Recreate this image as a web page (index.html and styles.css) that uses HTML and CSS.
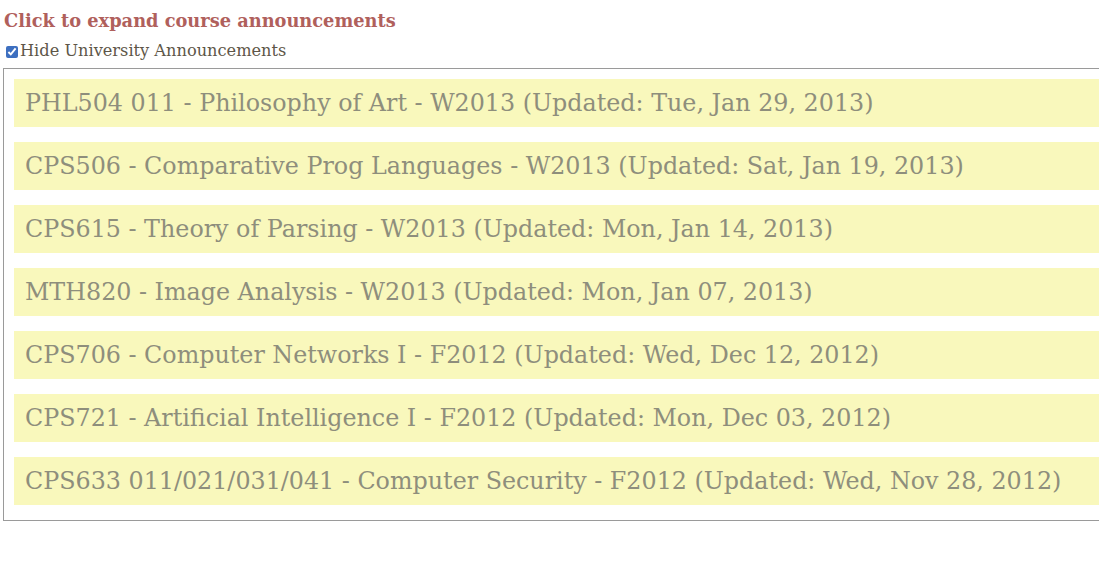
FILE: index.html
```html
<!DOCTYPE html>
<html>
<head>
<meta charset="utf-8">
<link rel="stylesheet" href="styles.css">
</head>
<body>
<div class="page">
  <h2 class="expand">Click to expand course announcements</h2>
  <label class="hide"><input type="checkbox" checked class="cb">Hide University Announcements</label>
  <div class="list">
    <div class="item">PHL504 011 - Philosophy of Art - W2013 (Updated: Tue, Jan 29, 2013)</div>
    <div class="item">CPS506 - Comparative Prog Languages - W2013 (Updated: Sat, Jan 19, 2013)</div>
    <div class="item">CPS615 - Theory of Parsing - W2013 (Updated: Mon, Jan 14, 2013)</div>
    <div class="item">MTH820 - Image Analysis - W2013 (Updated: Mon, Jan 07, 2013)</div>
    <div class="item">CPS706 - Computer Networks I - F2012 (Updated: Wed, Dec 12, 2012)</div>
    <div class="item">CPS721 - Artificial Intelligence I - F2012 (Updated: Mon, Dec 03, 2012)</div>
    <div class="item">CPS633 011/021/031/041 - Computer Security - F2012 (Updated: Wed, Nov 28, 2012)</div>
  </div>
</div>
</body>
</html>
```
FILE: styles.css
```css
html, body { margin: 0; padding: 0; background: #fff; }
body { font-family: "DejaVu Serif", serif; overflow: hidden; }
.page { padding: 8px 0 0 3px; width: 1110px; }
.expand { margin: 0 0 0 1px; font-size: 17.8px; font-weight: bold; color: #b0605c; line-height: 26px; }
.hide { display: flex; align-items: center; font-size: 16.2px; color: #5e5648; line-height: 22px; margin-top: 6px; }
.cb { margin: 1px 2px 0 3px; width: 12px; height: 12px; accent-color: #3d6fc0; }
.list { border: 1px solid #9a9a9a; padding: 10px 0 0 10px; margin-top: 6px; }
.item { background: #f9f8bc; height: 48px; line-height: 48px; padding-left: 11px; margin-bottom: 15px; font-size: 23.8px; color: #8e8e7c; white-space: nowrap; }
```
